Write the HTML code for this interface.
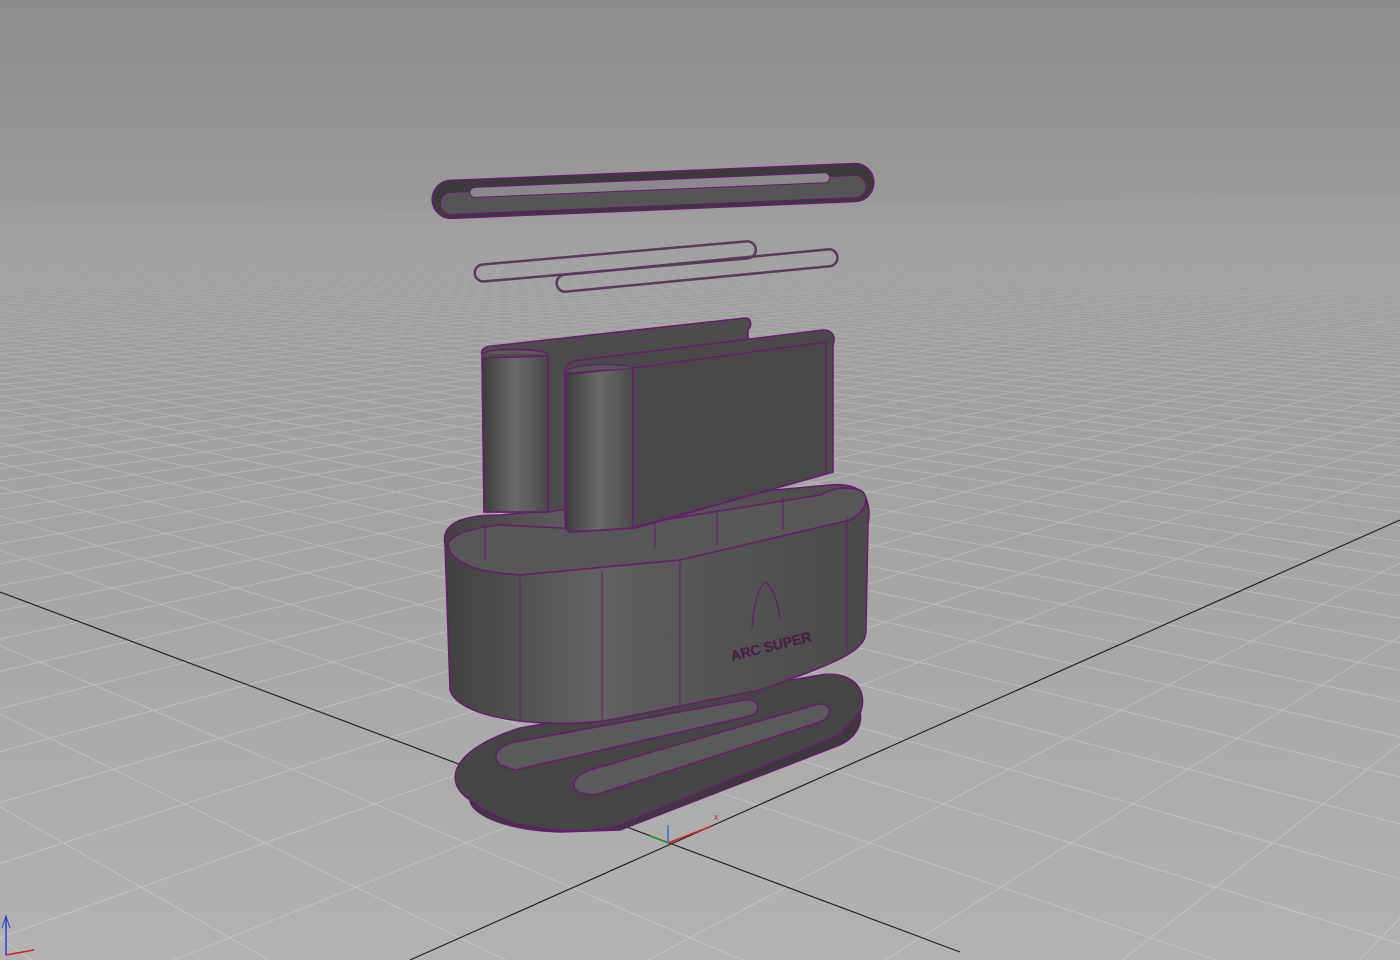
<!DOCTYPE html>
<html><head><meta charset="utf-8"><style>
html,body{margin:0;padding:0;width:1400px;height:960px;overflow:hidden;background:#9a9a9a}
svg{display:block;overflow:hidden}
</style></head><body>
<svg id="s" width="1400" height="960" viewBox="0 0 1400 960" xmlns="http://www.w3.org/2000/svg">
<defs>
<linearGradient id="bg" x1="0" y1="0" x2="0" y2="1">
<stop offset="0" stop-color="#8c8c8c"/><stop offset="0.19" stop-color="#999"/><stop offset="1" stop-color="#b2b2b2"/>
</linearGradient>
<linearGradient id="cyl" x1="0" y1="0" x2="1" y2="0">
<stop offset="0" stop-color="#3c3c3c"/><stop offset="0.5" stop-color="#6a6a6a"/><stop offset="1" stop-color="#4a4a4a"/>
</linearGradient>
<linearGradient id="bowl" x1="0" y1="0" x2="1" y2="0">
<stop offset="0" stop-color="#404040"/><stop offset="0.35" stop-color="#626262"/><stop offset="0.6" stop-color="#555"/><stop offset="1" stop-color="#4a4a4a"/>
</linearGradient>
<linearGradient id="fade" x1="0" y1="0" x2="0" y2="1">
<stop offset="0.18" stop-color="#fff" stop-opacity="0"/><stop offset="0.45" stop-color="#fff" stop-opacity="0.55"/><stop offset="1" stop-color="#fff" stop-opacity="1"/>
</linearGradient>
<mask id="m"><rect width="1400" height="960" fill="url(#fade)"/></mask>
</defs>
<rect width="1400" height="960" fill="url(#bg)"/>
<g id="grid" stroke="#c4c4c4" stroke-width="1" fill="none" mask="url(#m)"></g>
<line x1="0" y1="592" x2="960" y2="952" stroke="#222" stroke-width="1.2"/>
<line x1="1400" y1="520" x2="410" y2="960" stroke="#222" stroke-width="1.2"/>

<g stroke="#6a1a70" stroke-width="1.5">
<g transform="rotate(-2.4 652 190)">
<rect x="432" y="172" width="442" height="38" rx="19" fill="#3a3a3a"/>
<rect x="440" y="184" width="426" height="22" rx="11" fill="#555" stroke-width="1"/>
<rect x="470" y="180" width="360" height="10" rx="5" fill="#8a8a8a" stroke-width="1"/>
</g>
<g transform="rotate(-5 614 258)" fill="none" stroke-width="2.5">
<rect x="474" y="253" width="282" height="17" rx="8.5" stroke="#5a3a5a"/>
</g>
<g transform="rotate(-5.5 697 270)" fill="none" stroke-width="2.5">
<rect x="556" y="262" width="282" height="17" rx="8.5" stroke="#5a3a5a"/>
</g>

<path d="M470 800 C440 780 455 748 520 728 L820 675 C870 668 875 715 840 735 L620 825 C560 840 500 825 470 800 Z" fill="#454545"/>
<path d="M470 800 C470 812 500 830 560 832 L620 830 L840 745 C860 735 862 720 860 712 L840 735 L620 825 C560 840 500 825 470 800Z" fill="#3a3a3a"/>
<path d="M500 765 C490 755 500 745 515 742 L745 700 C760 698 762 712 750 716 L515 770 Z" fill="#5a5a5a"/>
<path d="M580 793 C568 786 575 775 590 770 L815 705 C830 700 836 715 820 722 L595 795 Z" fill="#5a5a5a"/>

<path d="M445 545 C440 520 470 515 500 515 L830 485 C865 482 872 500 868 525 L866 630 C866 650 845 660 760 690 L620 718 C560 730 460 722 450 690 Z" fill="url(#bowl)"/>
<path d="M448 545 C450 560 470 572 520 575 L680 560 L850 520 C868 510 870 495 860 490 C840 485 830 490 820 495 L600 530 L500 525 C470 528 450 535 448 545Z" fill="#575757"/>
<g stroke-width="1">
<line x1="520" y1="577" x2="520" y2="722"/><line x1="602" y1="571" x2="602" y2="726"/>
<line x1="680" y1="560" x2="680" y2="712"/><line x1="847" y1="517" x2="847" y2="650"/>
<line x1="485" y1="522" x2="485" y2="560"/><line x1="655" y1="520" x2="655" y2="548"/>
<line x1="717" y1="510" x2="717" y2="546"/><line x1="783" y1="497" x2="783" y2="530"/>
</g>
<text x="728" y="652" transform="rotate(-14 766 640)" font-family="Liberation Sans, sans-serif" font-size="14" font-weight="bold" fill="#3a2a3a" stroke="#5a1a5a" stroke-width="0.5">ARC SUPER</text>
<path d="M752 628 C754 600 760 585 766 582 C772 588 778 600 780 620" fill="none" stroke-width="1.2"/>

<path d="M482 355 C480 350 485 346 492 346 L745 318 C752 318 752 326 748 330 L748 480 L548 512 L484 512 Z" fill="#4c4c4c"/>
<path d="M482 358 L548 356 L548 512 L484 512 Z" fill="url(#cyl)"/>
<path d="M483 354 C486 348 540 348 548 354" fill="#5a5a5a"/>
<path d="M565 375 C563 365 572 360 580 360 L823 330 C833 330 836 337 833 345 L833 472 L636 528 L572 532 C566 532 565 527 565 520 Z" fill="#4a4a4a"/>
<path d="M566 374 L633 368 L633 528 L572 532 C566 532 565 527 566 520 Z" fill="url(#cyl)"/>
<path d="M633 368 L826 342 L826 474 L633 528 Z" fill="#484848"/>
<path d="M566 372 C570 364 620 362 634 368" fill="#555" stroke-width="1"/>
</g>
<g stroke-width="1.5" fill="none">
<line x1="668" y1="843" x2="668" y2="825" stroke="#3a6acc"/>
<line x1="668" y1="843" x2="712" y2="826" stroke="#d02020"/>
<line x1="668" y1="843" x2="650" y2="836" stroke="#20a020"/>
<line x1="6" y1="955" x2="6" y2="918" stroke="#2244cc"/>
<line x1="6" y1="955" x2="34" y2="950" stroke="#d02020"/>
</g>
<text x="714" y="820" font-family="Liberation Sans,sans-serif" font-size="9" fill="#d02020">x</text>
<path d="M2 928 L6 916 L10 928" fill="none" stroke="#2244cc"/>
<script>
(function(){
var g=document.getElementById('grid');var O=[668,843],V1=[-1099,180],V2=[2125,180],k=16;
function pt(V,u){var t=u/(u+k);return [O[0]+t*(V[0]-O[0]),O[1]+t*(V[1]-O[1])];}
function line(a,b){var dx=b[0]-a[0],dy=b[1]-a[1];var l=document.createElementNS('http://www.w3.org/2000/svg','line');
l.setAttribute('x1',a[0]);l.setAttribute('y1',a[1]);l.setAttribute('x2',a[0]+dx*4);l.setAttribute('y2',a[1]+dy*4);g.appendChild(l);}
for(var u=-13;u<=160;u++){if(u==0)continue;line(V1,pt(V2,u));line(V2,pt(V1,u));}
})();
</script>
</svg>
</body></html>
